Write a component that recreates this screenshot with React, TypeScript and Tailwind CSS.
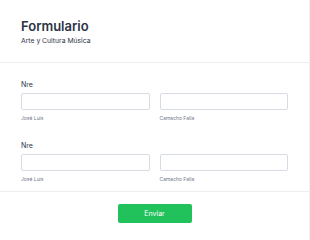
import React from "react";

function Group() {
  return (
    <div className="flex flex-col">
      <div className="h-[9px] text-[7px] leading-[9px] font-normal text-[#2c3345]">Nre</div>
      <div className="mt-[4px] grid grid-cols-2 gap-x-[10px]">
        <div className="flex flex-col">
          <div className="h-[17px] rounded-[2px] border border-[#d7dbe4] bg-white" />
          <div className="mt-[5px] h-[7px] text-[5px] leading-[7px] text-[#6f7687]">José Luis</div>
        </div>
        <div className="flex flex-col">
          <div className="h-[17px] rounded-[2px] border border-[#d7dbe4] bg-white" />
          <div className="mt-[5px] h-[7px] text-[5px] leading-[7px] text-[#6f7687]">Camacho Falla</div>
        </div>
      </div>
    </div>
  );
}

export default function App() {
  return (
    <div
      className="w-[310px] h-[240px] bg-white border-r border-[#eeeef3] overflow-hidden"
      style={{ fontFamily: "Inter, 'Noto Sans', sans-serif" }}
    >
      <div className="px-[21px] pt-[18px] pb-[17px] border-b border-[#ededf2]">
        <div className="text-[13px] leading-[17px] font-semibold text-[#2c3345]">Formulario</div>
        <div className="mt-[1px] text-[6.8px] leading-[9px] text-[#2c3345]">Arte y Cultura Música</div>
      </div>
      <div className="px-[21px] pt-[17px] pb-[8px] border-b border-[#ededf2] flex flex-col gap-[19px]">
        <Group />
        <Group />
      </div>
      <div className="flex justify-center pt-[12px]">
        <button className="w-[74px] h-[19px] rounded-[2px] bg-[#21c15c] text-white text-[7px] leading-[19px] font-normal">
          Enviar
        </button>
      </div>
    </div>
  );
}
